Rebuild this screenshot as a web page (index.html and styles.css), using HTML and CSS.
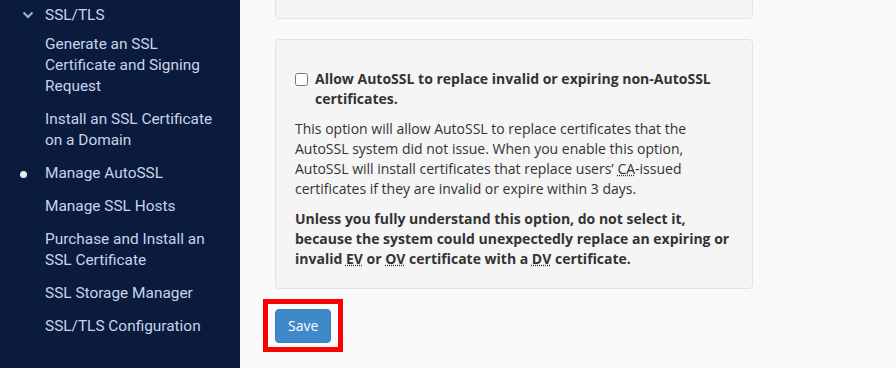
FILE: index.html
```html
<!DOCTYPE html>
<html lang="en">
<head>
    <meta charset="UTF-8">
    <title>Manage AutoSSL</title>
    <link rel="stylesheet" href="styles.css">
</head>
<body>

    <nav class="sidebar">
        <div class="group-title">
            <svg class="chevron" width="12" height="8" viewBox="0 0 12 8">
                <polyline points="1.5,1.5 6,6 10.5,1.5" fill="none" stroke="#8fb4e6" stroke-width="2"/>
            </svg>
            SSL/TLS
        </div>
        <ul class="nav-list">
            <li>Generate an SSL Certificate and Signing Request</li>
            <li>Install an SSL Certificate on a Domain</li>
            <li class="active">Manage AutoSSL</li>
            <li>Manage SSL Hosts</li>
            <li>Purchase and Install an SSL Certificate</li>
            <li>SSL Storage Manager</li>
            <li>SSL/TLS Configuration</li>
        </ul>
    </nav>

    <main class="content">
        <div class="panel panel-prev"></div>

        <div class="panel">
            <label class="check-row">
                <input type="checkbox" class="check">
                <span>Allow AutoSSL to replace invalid or expiring non-AutoSSL certificates.</span>
            </label>
            <p class="help">This option will allow AutoSSL to replace certificates that the AutoSSL system did not issue. When you enable this option, AutoSSL will install certificates that replace users’ <abbr title="Certificate Authority">CA</abbr>-issued certificates if they are invalid or expire within 3 days.</p>
            <p class="help warning">Unless you fully understand this option, do not select it, because the system could unexpectedly replace an expiring or invalid <abbr title="Extended Validation">EV</abbr> or <abbr title="Organization Validation">OV</abbr> certificate with a <abbr title="Domain Validation">DV</abbr> certificate.</p>
        </div>

        <div class="actions">
            <button type="button" class="btn">Save</button>
            <div class="highlight"></div>
        </div>
    </main>

</body>
</html>
```

FILE: styles.css
```css
* {
    margin: 0;
    padding: 0;
    box-sizing: border-box;
}

body {
    display: flex;
    height: 100vh;
    overflow: hidden;
    background: #fafafa;
    font-family: 'Open Sans', sans-serif;
    color: #333;
}

.sidebar {
    width: 240px;
    flex-shrink: 0;
    background: #0a1b3e;
    font-family: 'Roboto', sans-serif;
    font-size: 15.4px;
    line-height: 21px;
    color: #c8d4ea;
    padding-top: 4.5px;
}

.group-title {
    display: flex;
    align-items: center;
    padding-left: 22px;
    margin-bottom: 2px;
}

.chevron {
    margin-right: 11px;
}

.nav-list {
    list-style: none;
    padding: 0 18px 0 45px;
}

.nav-list li {
    position: relative;
    padding: 6px 0;
}

.nav-list li.active::before {
    content: "";
    position: absolute;
    left: -25px;
    top: 14px;
    width: 7px;
    height: 7px;
    border-radius: 50%;
    background: #e6ebf3;
}

.content {
    flex: 1;
    padding-left: 35px;
}

.panel {
    width: 478px;
    background: #f5f5f5;
    border: 1px solid #e3e3e3;
    border-radius: 4px;
    padding: 19px;
    font-size: 14px;
    line-height: 20px;
}

.panel-prev {
    height: 48px;
    margin-top: -29px;
    margin-bottom: 20px;
}

.check-row {
    display: flex;
    align-items: flex-start;
    margin-top: 10px;
    font-weight: bold;
}

.check {
    width: 13px;
    height: 13px;
    margin: 4px 7px 0 0;
    flex-shrink: 0;
}

.help {
    margin-top: 10px;
}

.warning {
    font-weight: bold;
}

abbr {
    text-decoration: underline dotted;
}

.actions {
    position: relative;
    padding-top: 20px;
}

.btn {
    background: #3f88c9;
    color: #fff;
    border: 1px solid #3a7fbd;
    border-radius: 4px;
    padding: 6px 12px;
    font-family: 'Open Sans', sans-serif;
    font-size: 14px;
    line-height: 20px;
    width: 56px;
}

.highlight {
    position: absolute;
    left: -12px;
    top: 10px;
    width: 80px;
    height: 53px;
    border: 5px solid #ff0000;
}
```
